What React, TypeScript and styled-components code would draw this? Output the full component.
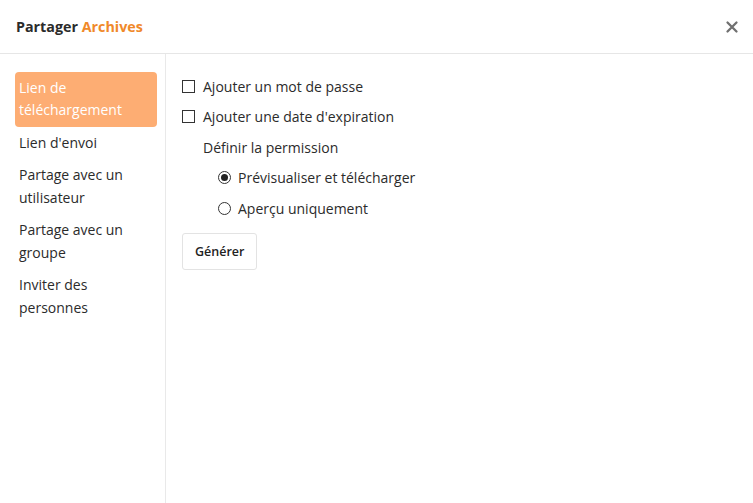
import React, { useState } from "react";
import styled, { createGlobalStyle } from "styled-components";

const GlobalStyle = createGlobalStyle`
  html, body {
    margin: 0;
    padding: 0;
    background: #ffffff;
  }
  body {
    font-family: "Open Sans", "Noto Sans", "Liberation Sans", sans-serif;
    color: #212529;
  }
`;

const Modal = styled.div`
  width: 753px;
  height: 503px;
  display: flex;
  flex-direction: column;
  background: #fff;
`;

const Header = styled.div`
  height: 54px;
  display: flex;
  align-items: center;
  justify-content: space-between;
  padding: 0 14px 0 16px;
  border-bottom: 1px solid #e6e6e6;
  box-sizing: border-box;
`;

const Title = styled.h5`
  margin: 0;
  font-size: 14.3px;
  font-weight: 700;
  color: #2b2b2b;
  span {
    color: #f0892a;
  }
`;

const Close = styled.button`
  border: 0;
  background: none;
  padding: 0;
  width: 14px;
  height: 14px;
  display: flex;
  cursor: pointer;
`;

const Body = styled.div`
  flex: 1;
  display: flex;
`;

const Sidebar = styled.nav`
  width: 166px;
  flex-shrink: 0;
  box-sizing: border-box;
  padding: 17.5px 8px 0 15px;
  border-right: 1px solid #e9e9e9;
`;

const NavItem = styled.div<{ $active?: boolean }>`
  padding: 5px 4px;
  border-radius: 4px;
  font-size: 14px;
  line-height: 22.5px;
  cursor: pointer;
  color: ${(p) => (p.$active ? "#ffffff" : "#2b2b2b")};
  background: ${(p) => (p.$active ? "#fdad73" : "transparent")};
`;

const Content = styled.div`
  flex: 1;
  padding: 17px 16px 0 16px;
  display: flex;
  flex-direction: column;
  align-items: flex-start;
`;

const Row = styled.label<{ $indent?: number }>`
  display: flex;
  align-items: center;
  height: 30.5px;
  margin-left: ${(p) => p.$indent || 0}px;
  font-size: 14px;
  color: #2b2b2b;
  cursor: pointer;
`;

const Box = styled.span`
  width: 11px;
  height: 11px;
  border: 1px solid #333;
  margin-right: 8px;
  background: #fff;
`;

const Radio = styled.span<{ $on?: boolean }>`
  width: 11px;
  height: 11px;
  border: 1px solid #333;
  border-radius: 50%;
  margin-right: 7px;
  display: flex;
  align-items: center;
  justify-content: center;
  &::after {
    content: "";
    width: 7px;
    height: 7px;
    border-radius: 50%;
    background: ${(p) => (p.$on ? "#222" : "transparent")};
  }
`;

const Legend = styled.div`
  height: 30.5px;
  display: flex;
  align-items: center;
  margin-left: 21px;
  font-size: 14px;
  color: #2b2b2b;
`;

const Button = styled.button`
  margin-top: 9px;
  height: 37px;
  padding: 0 12px;
  background: #fff;
  border: 1px solid #e3e3e3;
  border-radius: 3px;
  font-family: inherit;
  font-size: 12.5px;
  font-weight: 600;
  color: #222;
  cursor: pointer;
`;

const items = [
  "Lien de téléchargement",
  "Lien d'envoi",
  "Partage avec un utilisateur",
  "Partage avec un groupe",
  "Inviter des personnes",
];

export default function App() {
  const [active, setActive] = useState(0);
  const [perm, setPerm] = useState(0);
  return (
    <>
      <GlobalStyle />
      <Modal>
        <Header>
          <Title>
            Partager <span>Archives</span>
          </Title>
          <Close aria-label="Fermer">
            <svg width="14" height="14" viewBox="0 0 14 14">
              <path
                d="M2.5 2.5 L11.5 11.5 M11.5 2.5 L2.5 11.5"
                stroke="#707070"
                strokeWidth="2.3"
                strokeLinecap="round"
              />
            </svg>
          </Close>
        </Header>
        <Body>
          <Sidebar>
            {items.map((t, i) => (
              <NavItem key={t} $active={i === active} onClick={() => setActive(i)}>
                {t}
              </NavItem>
            ))}
          </Sidebar>
          <Content>
            <Row>
              <Box />
              Ajouter un mot de passe
            </Row>
            <Row>
              <Box />
              Ajouter une date d'expiration
            </Row>
            <Legend>Définir la permission</Legend>
            <Row $indent={36} onClick={() => setPerm(0)}>
              <Radio $on={perm === 0} />
              Prévisualiser et télécharger
            </Row>
            <Row $indent={36} onClick={() => setPerm(1)}>
              <Radio $on={perm === 1} />
              Aperçu uniquement
            </Row>
            <Button>Générer</Button>
          </Content>
        </Body>
      </Modal>
    </>
  );
}
